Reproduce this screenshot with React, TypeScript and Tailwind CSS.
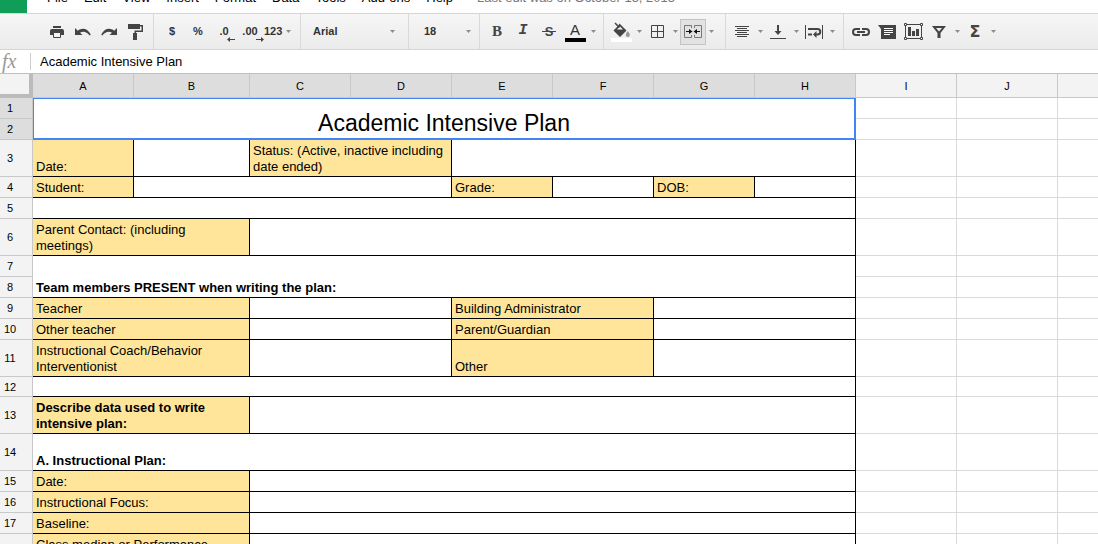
import React from "react";

type IconProps = { w: number; h: number; children: React.ReactNode };

function Icon({ w, h, children }: IconProps) {
  return (
    <svg width={w} height={h} viewBox={`0 0 ${w} ${h}`} fill="#444" aria-hidden="true" className="shrink-0">
      {children}
    </svg>
  );
}

const PrintIcon = () => (
  <Icon w={14} h={12}>
    <path d="M3 0h8v2H3zM2 3h10a2 2 0 0 1 2 2v4h-3V7H3v2H0V5a2 2 0 0 1 2-2z" />
    <path d="M3.500 6.500h7v5h-7z" fill="#f5f5f5" stroke="#444" />
  </Icon>
);

const UndoIcon = () => (
  <Icon w={16} h={8}>
    <path d="M0 0v7h7.500L5 4.700C7.500 3 11.500 3 14.600 7.500l1.200-.7C13 .200 7 -.800 2.800 2.700z" />
  </Icon>
);

const RedoIcon = () => (
  <Icon w={16} h={8}>
    <path d="M16 0v7H8.500L11 4.700C8.500 3 4.500 3 1.400 7.500L.2 6.800C3 .200 9 -.800 13.200 2.700z" />
  </Icon>
);

const PaintFormatIcon = () => (
  <Icon w={15} h={16}>
    <path d="M0 0h12v5H0zM12 1h3v7H8v1.500H6.500V6.500h7v-4H12z" />
    <path d="M5 9h4v7H5z" />
  </Icon>
);

const FillIcon = () => (
  <Icon w={17} h={16}>
    <path d="M2 1l4.500 4.500" fill="none" stroke="#444" strokeWidth="1.500" />
    <path d="M6.500 1.500L13.500 8.500 7 15 0.5 8.500 5.200 3.800z M7 4.500L3.800 7.500h6.200z" fillRule="evenodd" />
    <path d="M14.800 9c1.300 1.800 2 2.800 2 4a2 2 0 0 1-4 0c0-1.200.7-2.200 2-4z" fill="#999" />
  </Icon>
);

const BordersIcon = () => (
  <Icon w={13} h={13}>
    <path d="M0.5 0.5h12v12h-12zM6.500 0.5v12M0.5 6.500h12" fill="none" stroke="#444" />
  </Icon>
);

const MergeIcon = () => (
  <Icon w={18} h={13}>
    <path d="M7.500 3V.5h-7v12h7V10M10.500 3V.5h7v12h-7V10" fill="none" stroke="#777" />
    <path d="M2 6h3V4l3.500 2.500L5 9V7H2zM16 6h-3V4L9.500 6.500 13 9V7h3z" fill="#111" />
  </Icon>
);

const AlignIcon = () => (
  <Icon w={14} h={12}>
    <path d="M0 0.500h14M2 2.500h10M0 4.500h14M2 6.500h10M0 8.500h14M2 10.500h10" stroke="#444" />
  </Icon>
);

const VerticalAlignIcon = () => (
  <Icon w={16} h={14}>
    <path d="M7 0h2v6h2.500L8 10 4.500 6H7zM0 13h16v1H0z" />
  </Icon>
);

const WrapIcon = () => (
  <Icon w={18} h={14}>
    <path d="M0 0h1v14H0zM17 0h1v14h-1z" />
    <path d="M3 4h9.500a2.500 2.500 0 0 1 0 5.500H11M3 9.500h4" fill="none" stroke="#444" strokeWidth="2" />
    <path d="M8 9.500L11.500 6v7z" />
  </Icon>
);

const LinkIcon = () => (
  <Icon w={18} h={8}>
    <path d="M8 1H4a3 3 0 0 0 0 6h4M10 1h4a3 3 0 0 1 0 6h-4" fill="none" stroke="#444" strokeWidth="2" />
    <path d="M5 3h8v2H5z" />
  </Icon>
);

const CommentIcon = () => (
  <Icon w={18} h={14}>
    <path d="M0 0h18v14H3V4z" />
    <path d="M6 3.500h9M6 5.500h9M6 7.500h9M6 9.500h6" stroke="#fff" strokeWidth="1" />
  </Icon>
);

const ChartIcon = () => (
  <Icon w={19} h={17}>
    <path d="M1.500 1.500h16v14h-16z" fill="none" stroke="#444" />
    <path d="M0.500 0.500h2v2h-2zM16.500 0.500h2v2h-2zM0.500 14.500h2v2h-2zM16.500 14.500h2v2h-2z" fill="#fff" stroke="#444" />
    <path d="M4 4h3v9H4zM8 8h3v5H8zM12 6h3v7h-3z" />
  </Icon>
);

const FilterIcon = () => (
  <Icon w={14} h={12}>
    <path d="M0 0h14L8.500 7v5h-3V7zM4 2l3 3.500L10 2z" fillRule="evenodd" />
  </Icon>
);

const Caret = ({ className = "" }: { className?: string }) => (
  <svg width="5" height="3" viewBox="0 0 5 3" fill="#8c8c8c" aria-hidden="true" className={`shrink-0 ${className}`}>
    <path d="M0 0h5L2.500 3z" />
  </svg>
);

function Tool({ label, children }: { label: string; children: React.ReactNode }) {
  return (
    <button type="button" aria-label={label} className="flex h-[26px] w-[26px] shrink-0 items-center justify-center">
      {children}
    </button>
  );
}

function DropTool({ label, pressed, children }: { label: string; pressed?: boolean; children: React.ReactNode }) {
  return (
    <button type="button" aria-label={label} aria-pressed={pressed} className="flex h-[26px] w-9 shrink-0 items-center">
      <span
        className={
          pressed
            ? "flex h-[26px] w-[26px] items-center justify-center border border-[#c4c4c4] bg-[#e2e2e2]"
            : "flex h-[26px] w-[26px] items-center justify-center"
        }
      >
        {children}
      </span>
      <Caret className="ml-[3px]" />
    </button>
  );
}

function Group({ className, children }: { className: string; children: React.ReactNode }) {
  return <div className={`flex h-full shrink-0 items-center border-r border-[#d9d9d9] ${className}`}>{children}</div>;
}

function Decimals({ text, back }: { text: string; back?: boolean }) {
  return (
    <span className="relative">
      {text}
      <svg width="8" height="5" viewBox="0 0 8 5" fill="#444" aria-hidden="true" className="absolute -right-1.5 -bottom-0.5">
        {back ? <path d="M0 2.500L3 0v2h5v1H3v2z" /> : <path d="M8 2.500L5 0v2H0v1h5v2z" />}
      </svg>
    </span>
  );
}

const menus = ["File", "Edit", "View", "Insert", "Format", "Data", "Tools", "Add-ons", "Help"];

function MenuBar() {
  return (
    <header className="flex h-[13px] shrink-0 items-end">
      <div className="h-full w-[27px] bg-[#0f9d58]" />
      <nav className="ml-5 flex gap-4 pb-[7px] text-[13px] leading-4">
        {menus.map((m) => (
          <button key={m} type="button">
            {m}
          </button>
        ))}
      </nav>
      <span className="ml-6 pb-[7px] text-[13px] leading-4 whitespace-nowrap text-[#777]">
        Last edit was on October 15, 2015
      </span>
    </header>
  );
}

function Toolbar() {
  return (
    <div
      role="toolbar"
      className="flex h-[37px] shrink-0 items-center border-y border-[#d5d5d5] bg-linear-to-b from-[#f6f6f6] to-[#ebebeb] text-[11px] font-bold text-[#333]"
    >
      <Group className="pr-[5px] pl-11">
        <Tool label="Print"><PrintIcon /></Tool>
        <Tool label="Undo"><UndoIcon /></Tool>
        <Tool label="Redo"><RedoIcon /></Tool>
        <Tool label="Paint format"><PaintFormatIcon /></Tool>
      </Group>
      <Group className="px-[5px]">
        <Tool label="Format as currency">$</Tool>
        <Tool label="Format as percent">%</Tool>
        <Tool label="Decrease decimal places"><Decimals text=".0" back /></Tool>
        <Tool label="Increase decimal places"><Decimals text=".00" /></Tool>
        <button type="button" aria-label="More formats" className="flex h-[26px] w-8 items-center gap-1 pl-px">
          123 <Caret />
        </button>
      </Group>
      <Group className="relative">
        <select aria-label="Font" defaultValue="Arial" className="h-[26px] w-[107px] appearance-none pl-3">
          <option>Arial</option>
        </select>
        <Caret className="pointer-events-none absolute right-[13px]" />
      </Group>
      <Group className="relative">
        <select aria-label="Font size" defaultValue="18" className="h-[26px] w-[70px] appearance-none pl-[15px]">
          <option>18</option>
        </select>
        <Caret className="pointer-events-none absolute right-2" />
      </Group>
      <Group className="pr-[5px] pl-1">
        <Tool label="Bold"><span className="font-['Liberation_Serif',serif] text-[15px] text-[#444]">B</span></Tool>
        <Tool label="Italic"><span className="font-['Liberation_Mono',monospace] text-[15px] text-[#444] italic">I</span></Tool>
        <Tool label="Strikethrough"><span className="text-[13px] text-[#444] line-through">{"\u2009S\u2009"}</span></Tool>
        <DropTool label="Text color">
          <span className="w-[21px] border-b-4 border-black text-[15px] leading-4 font-normal">A</span>
        </DropTool>
      </Group>
      <Group className="pr-[9px] pl-1">
        <DropTool label="Fill color">
          <span className="flex w-[21px] flex-col items-center border-b-4 border-white"><FillIcon /></span>
        </DropTool>
        <DropTool label="Borders"><BordersIcon /></DropTool>
        <DropTool label="Merge cells" pressed><MergeIcon /></DropTool>
      </Group>
      <Group className="pr-1.5 pl-[3px]">
        <DropTool label="Horizontal align"><AlignIcon /></DropTool>
        <DropTool label="Vertical align"><VerticalAlignIcon /></DropTool>
        <DropTool label="Text wrapping"><WrapIcon /></DropTool>
      </Group>
      <div className="flex items-center pl-1">
        <Tool label="Insert link"><LinkIcon /></Tool>
        <Tool label="Insert comment"><CommentIcon /></Tool>
        <Tool label="Insert chart"><ChartIcon /></Tool>
        <DropTool label="Filter"><FilterIcon /></DropTool>
        <DropTool label="Functions"><span className="font-['DejaVu_Sans',sans-serif] text-base text-[#444]">Σ</span></DropTool>
      </div>
    </div>
  );
}

function FormulaBar() {
  return (
    <div className="flex h-6 shrink-0 items-center border-b border-[#c0c0c0]">
      <label htmlFor="formula" className="w-[30px] pb-0.5 pl-0.5 font-['Liberation_Serif',serif] text-xl leading-5 text-[#999] italic">
        fx
      </label>
      <div className="h-[17px] w-px bg-[#ccc]" />
      <input id="formula" defaultValue="Academic Intensive Plan" className="ml-[9px] h-5 flex-1 text-[13px] outline-none" />
    </div>
  );
}

type Cell = { span: number; text?: string; fill?: boolean; bold?: boolean; open?: boolean; top?: boolean };
type Row = { height: string; cells: Cell[] };

const h20 = "h-5";
const h21 = "h-[21px]";
const h37 = "h-[37px]";

const label = (span: number, text: string): Cell => ({ span, text, fill: true });
const blank = (span: number): Cell => ({ span });

const rows: Row[] = [
  { height: h37, cells: [label(1, "Date:"), blank(1), label(2, "Status: (Active, inactive including date ended)"), blank(4)] },
  { height: h21, cells: [label(1, "Student:"), blank(3), label(1, "Grade:"), blank(1), label(1, "DOB:"), blank(1)] },
  { height: h21, cells: [blank(8)] },
  { height: h37, cells: [label(2, "Parent Contact: (including meetings)"), blank(6)] },
  { height: h21, cells: [{ span: 8, open: true }] },
  { height: h21, cells: [{ span: 8, text: "Team members PRESENT when writing the plan:", bold: true }] },
  { height: h21, cells: [label(2, "Teacher"), blank(2), label(2, "Building Administrator"), blank(2)] },
  { height: h21, cells: [label(2, "Other teacher"), blank(2), label(2, "Parent/Guardian"), blank(2)] },
  { height: h37, cells: [label(2, "Instructional Coach/Behavior Interventionist"), blank(2), label(2, "Other"), blank(2)] },
  { height: h20, cells: [blank(8)] },
  { height: h37, cells: [{ span: 2, text: "Describe data used to write intensive plan:", fill: true, bold: true }, blank(6)] },
  { height: h37, cells: [{ span: 8, text: "A. Instructional Plan:", bold: true }] },
  { height: h21, cells: [label(2, "Date:"), blank(6)] },
  { height: h21, cells: [label(2, "Instructional Focus:"), blank(6)] },
  { height: h21, cells: [label(2, "Baseline:"), blank(6)] },
  { height: h37, cells: [{ span: 2, text: "Class median or Performance", fill: true, top: true }, blank(6)] },
];

function RowHeader({ n, active }: { n: number; active?: boolean }) {
  return (
    <th
      scope="row"
      className={`border-r border-b border-[#c8c8c8] py-0 pr-3 text-center text-[11px] leading-4 font-normal ${
        active ? "bg-[#ddd]" : "bg-[#f3f3f3]"
      }`}
    >
      {n}
    </th>
  );
}

function Spare() {
  return (
    <>
      <td className="border-r border-b border-[#d9d9d9]" />
      <td className="border-r border-b border-[#d9d9d9]" />
      <td className="border-b border-[#d9d9d9]" />
    </>
  );
}

function Sheet() {
  return (
    <table className="w-full table-fixed border-separate border-spacing-0">
      <colgroup>
        <col className="w-[33px]" />
        <col className="w-[101px]" />
        <col className="w-[116px]" />
        <col className="w-[101px]" />
        <col className="w-[101px]" />
        <col className="w-[101px]" />
        <col className="w-[101px]" />
        <col className="w-[101px]" />
        <col className="w-[101px]" />
        <col className="w-[101px]" />
        <col className="w-[101px]" />
        <col />
      </colgroup>
      <thead>
        <tr className="h-6">
          <td className="border-r-4 border-b-4 border-[#bbb] bg-[#f3f3f3]" />
          {"ABCDEFGHIJ".split("").map((c) => (
            <th
              key={c}
              scope="col"
              className={`border-r border-b border-[#c8c8c8] p-0 text-center text-[11px] leading-4 font-normal ${
                c < "I" ? "bg-[#ddd]" : "bg-[#f3f3f3]"
              }`}
            >
              {c}
            </th>
          ))}
          <td className="border-b border-[#c8c8c8] bg-[#f3f3f3]" />
        </tr>
      </thead>
      <tbody>
        <tr className="h-[21px]">
          <RowHeader n={1} active />
          <td
            colSpan={8}
            rowSpan={2}
            className="border-t border-r-2 border-b-2 border-l border-[#4285f4] p-0 pb-px text-center align-bottom text-[23px] leading-7"
          >
            Academic Intensive Plan
          </td>
          <Spare />
        </tr>
        <tr className="h-[21px]">
          <RowHeader n={2} active />
          <Spare />
        </tr>
        {rows.map((row, i) => (
          <tr key={i} className={row.height}>
            <RowHeader n={i + 3} />
            {row.cells.map((cell, j) => (
              <td
                key={j}
                colSpan={cell.span}
                className={`border-r border-black px-[3px] pt-[3px] pb-px text-[13px] leading-4 ${
                  cell.top ? "align-top" : "align-bottom"
                } ${cell.open ? "" : "border-b"} ${cell.fill ? "bg-[#ffe599]" : ""} ${cell.bold ? "font-bold" : ""}`}
              >
                {cell.text}
              </td>
            ))}
            <Spare />
          </tr>
        ))}
      </tbody>
    </table>
  );
}

export default function App() {
  return (
    <div className="flex h-screen flex-col overflow-hidden bg-white font-['Liberation_Sans',Arial,sans-serif] text-black">
      <MenuBar />
      <Toolbar />
      <FormulaBar />
      <main className="min-h-0 flex-1 overflow-hidden">
        <Sheet />
      </main>
    </div>
  );
}
